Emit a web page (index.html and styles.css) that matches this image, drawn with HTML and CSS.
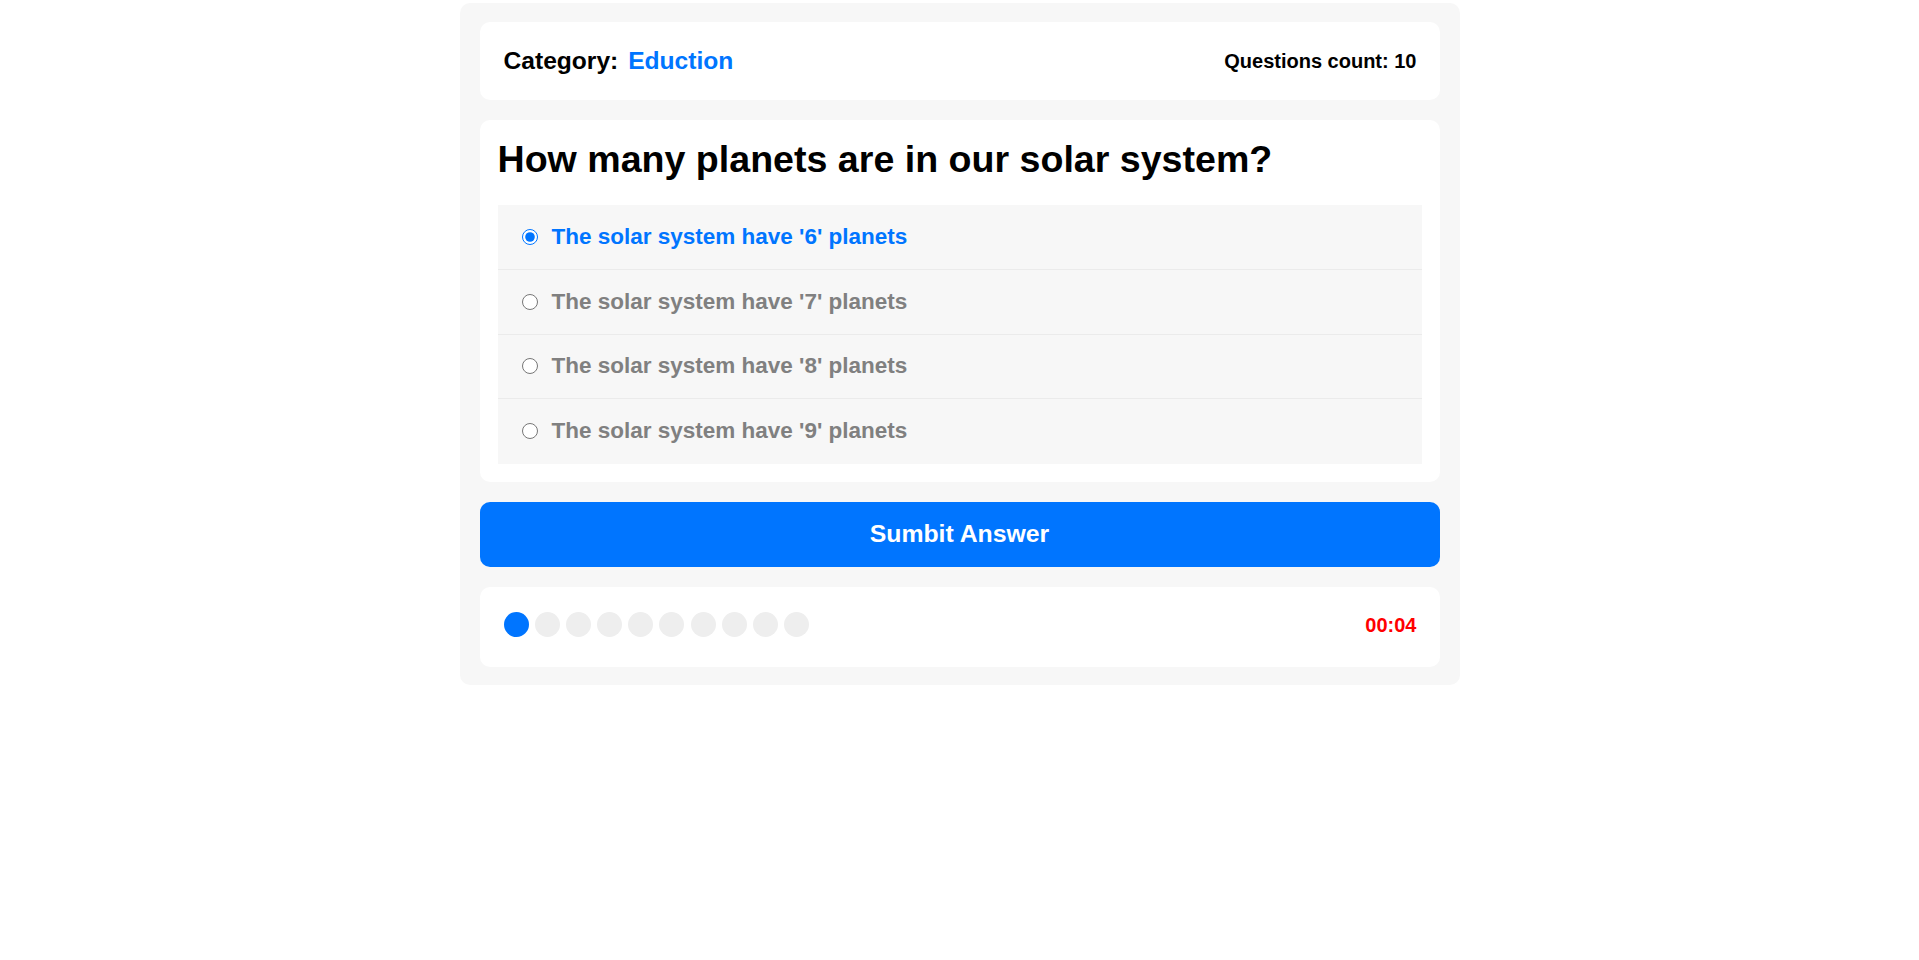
FILE: index.html
```html
<!DOCTYPE html>
<html lang="en">
<head>
<meta charset="utf-8">
<title>Quiz</title>
<link rel="stylesheet" href="styles.css">
</head>
<body>
<div class="quiz">
  <div class="card info">
    <div class="category">Category: <span class="cat-name">Eduction</span></div>
    <div class="count">Questions count: 10</div>
  </div>
  <div class="card question">
    <h2 class="title">How many planets are in our solar system?</h2>
    <div class="answers">
      <label class="answer selected"><input type="radio" name="a" checked><span>The solar system have '6' planets</span></label>
      <label class="answer"><input type="radio" name="a"><span>The solar system have '7' planets</span></label>
      <label class="answer"><input type="radio" name="a"><span>The solar system have '8' planets</span></label>
      <label class="answer"><input type="radio" name="a"><span>The solar system have '9' planets</span></label>
    </div>
  </div>
  <button class="submit">Sumbit Answer</button>
  <div class="card footer">
    <div class="bullets">
      <span class="dot on"></span><span class="dot"></span><span class="dot"></span><span class="dot"></span><span class="dot"></span><span class="dot"></span><span class="dot"></span><span class="dot"></span><span class="dot"></span><span class="dot"></span>
    </div>
    <div class="timer">00:04</div>
  </div>
</div>
</body>
</html>
```
FILE: styles.css
```css
* { box-sizing: border-box; }
html, body {
  margin: 0;
  padding: 0;
  background: #ffffff;
  font-family: "Liberation Sans", Arial, sans-serif;
  font-weight: bold;
}
.quiz {
  width: 1000px;
  margin: 3px auto 0;
  padding: 19px 20px 18px;
  background: #f7f7f7;
  border-radius: 10px;
  display: flex;
  flex-direction: column;
  gap: 20px;
}
.card {
  background: #ffffff;
  border-radius: 10px;
}
.info {
  display: flex;
  justify-content: space-between;
  align-items: center;
  height: 78px;
  padding: 0 23px 0 24px;
}
.category { font-size: 24.6px; color: #000; }
.cat-name { color: #0075ff; margin-left: 3px; }
.count { font-size: 20px; color: #000; }
.question {
  padding: 18px 18px 18px;
}
.title {
  margin: 0 0 24px;
  font-size: 37.6px;
  line-height: 43px;
  color: #000;
}
.answers {
  background: #f7f7f7;
}
.answer {
  display: flex;
  align-items: center;
  height: 64.5px;
  padding-left: 24px;
  gap: 14px;
  border-bottom: 1px solid #ebebeb;
  font-size: 22.5px;
  color: #808080;
  cursor: pointer;
}
.answer:first-child { height: 65px; }
.answer:last-child { border-bottom: none; }
.answer input {
  margin: 0;
  width: 16px;
  height: 16px;
}
.answer.selected { color: #0075ff; }
.submit {
  display: block;
  width: 100%;
  height: 65px;
  border: none;
  border-radius: 10px;
  background: #0075ff;
  color: #ffffff;
  font-family: "Liberation Sans", Arial, sans-serif;
  font-weight: bold;
  font-size: 24.8px;
}
.footer {
  display: flex;
  justify-content: space-between;
  align-items: center;
  height: 80px;
  padding: 0 23px 0 24px;
}
.bullets {
  display: flex;
  gap: 6.2px;
  margin-top: -5px;
}
.dot {
  width: 25px;
  height: 25px;
  border-radius: 50%;
  background: #eeeeee;
}
.dot.on { background: #0075ff; }
.timer {
  font-size: 20px;
  color: #ff0000;
  margin-top: -2px;
}
```
